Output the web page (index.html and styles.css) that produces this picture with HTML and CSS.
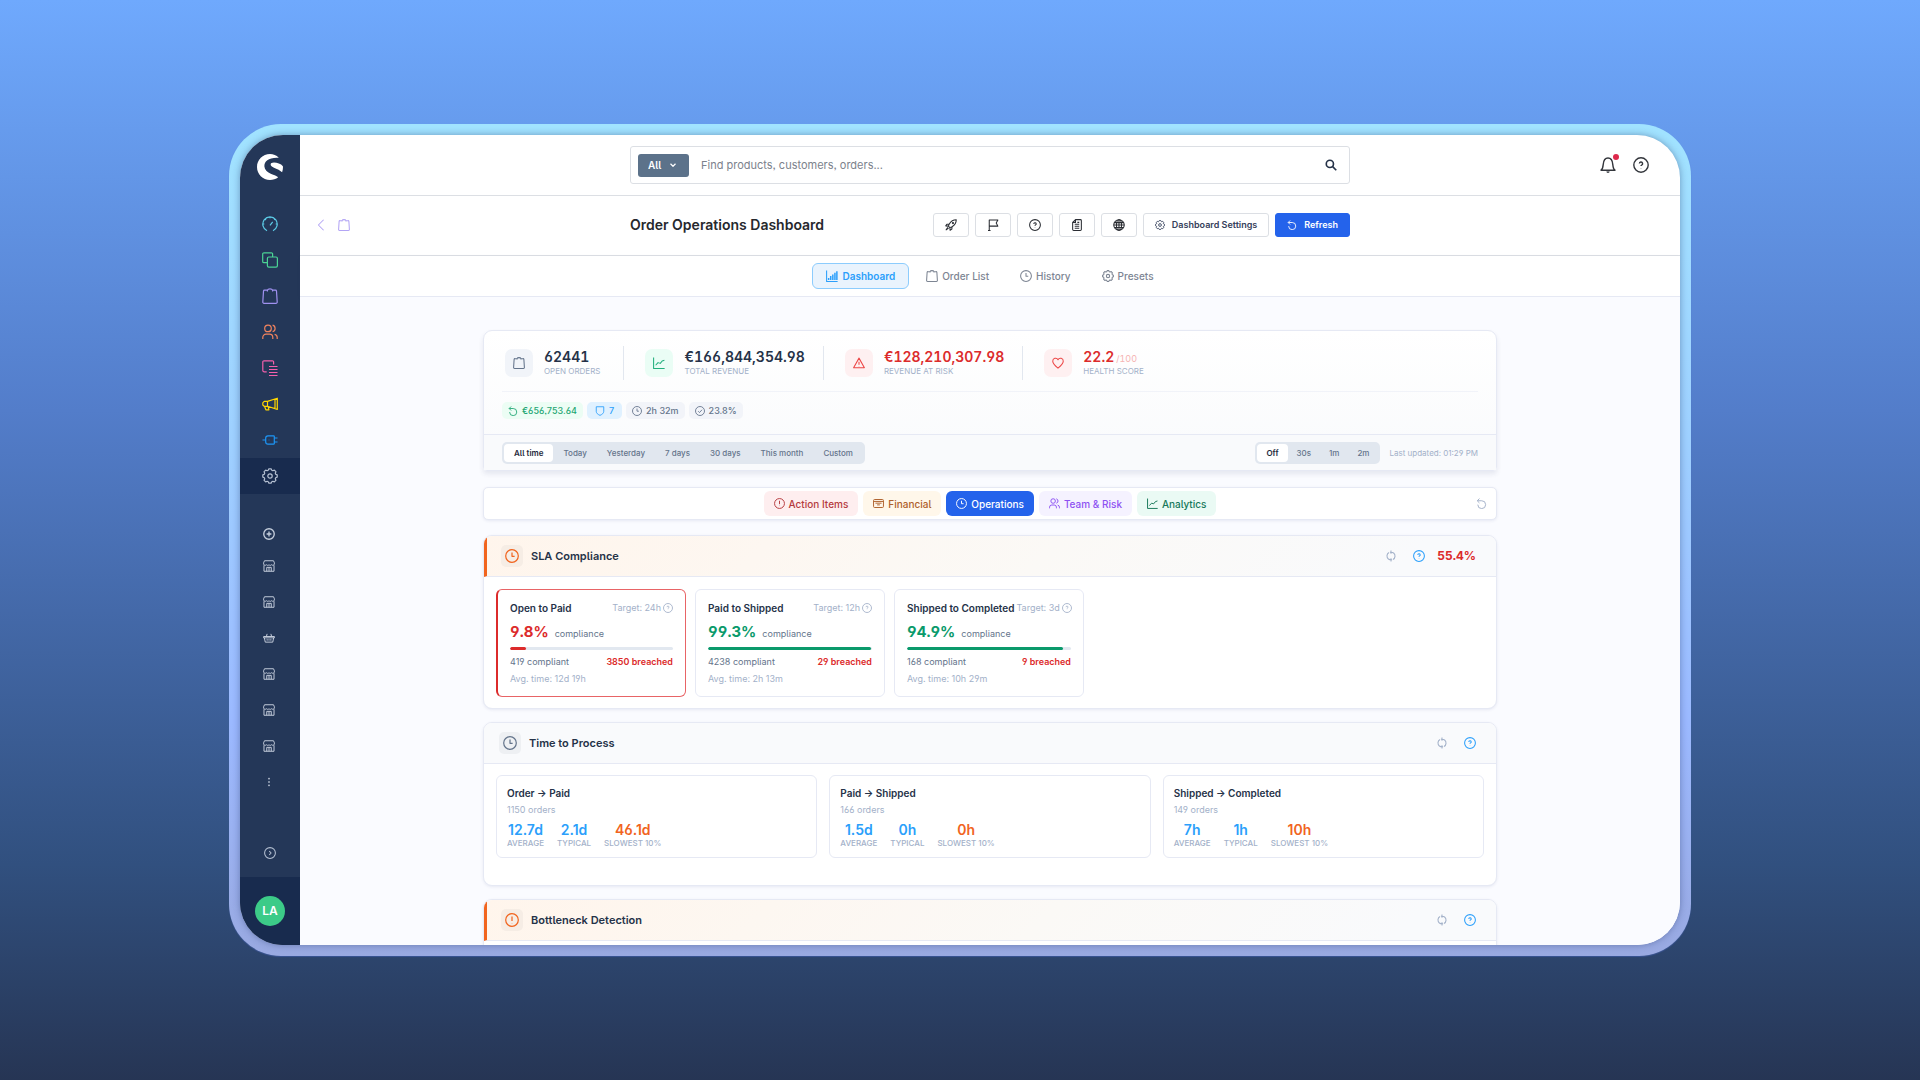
FILE: index.html
```html
<!DOCTYPE html>
<html lang="en">
<head>
<meta charset="utf-8">
<meta name="viewport" content="width=device-width, initial-scale=1">
<title>Order Operations Dashboard</title>
<link rel="stylesheet" href="styles.css">
</head>
<body>
<svg class="sprite" aria-hidden="true">
  <symbol id="logo" viewBox="0 0 26 26"><path fill="currentColor" stroke="none" d="M21.8 3.7C19.4 1.300 16.300 0 13 0 5.800 0 0 5.800 0 13s5.800 13 13 13c3 0 5.900-1 8.200-2.800C18 20.500 7.900 19.500 7.400 12.500 7.100 6.800 12 3.100 21.800 3.700z"/><path fill="currentColor" stroke="none" d="M25.900 12.200C24 9.800 20 8.600 17 8.600c-2.600 0-3.700 1-3.200 2.600.7 2.400 7 3 11.300 7 .8-2 1-4 .8-6z"/></symbol>
  <symbol id="gauge" viewBox="0 0 16 16"><path d="M5 14.700A7.200 7.200 0 1 1 11 14.700M8 9.300l2.700-3.500M8 1v1.300M1 8h1.300M13.700 8H15M3.200 3.200l.8.8M12.800 3.200l-.6.6"/></symbol>
  <symbol id="copy" viewBox="0 0 16 16"><rect x="5.400" y="5" width="10" height="10.200" rx="1.400"/><path d="M5.400 10.700H2a1.300 1.300 0 0 1-1.300-1.300V2.100A1.300 1.300 0 0 1 2 .8h7.300a1.300 1.300 0 0 1 1.300 1.300V5"/></symbol>
  <symbol id="bag" viewBox="0 0 16 16"><path d="M5.400 3.400V2.200H2.500a1 1 0 0 0-1 .9L.8 14a1.200 1.200 0 0 0 1.200 1.300h12a1.200 1.200 0 0 0 1.200-1.300l-.7-10.900a1 1 0 0 0-1-.9h-2.900v1.200M5.400 2.200C6 .4 10 .4 10.600 2.200"/></symbol>
  <symbol id="users" viewBox="0 0 16 16"><circle cx="6" cy="4.400" r="3.300"/><path d="M.8 15v-1.600A3.200 3.200 0 0 1 4 10.200h3.600a3.200 3.200 0 0 1 3.200 3.200V15M10.600 1.200a3.300 3.300 0 0 1 0 6.400M12.600 10.300a3.200 3.200 0 0 1 2.600 3.100V15"/></symbol>
  <symbol id="content" viewBox="0 0 16 16"><path d="M11.600 4.500V2A1.200 1.200 0 0 0 10.400.8H2A1.200 1.200 0 0 0 .8 2v8.600A1.200 1.200 0 0 0 2 11.800h2.700M7 6.500h8.500M7 9.500h8.500M7 12.500h8.500M7 15.500h8.500"/></symbol>
  <symbol id="megaphone" viewBox="0 0 16 16"><path d="M5.500 5.400L15.300 2.200v11.200L5.500 10.300zM5.500 5.400H2.200L.8 6.800v2.200l1.400 1.300h3.300M2.500 10.300l1.400 3.500h3l-.7-3.200M13 3v9.600"/></symbol>
  <symbol id="plug" viewBox="0 0 16 16"><path d="M.5 8h3.200M11.500 3.800H6A2.300 2.300 0 0 0 3.700 6v4A2.300 2.300 0 0 0 6 12.200h5.500a.8.8 0 0 0 .8-.8V4.600a.8.800 0 0 0-.8-.8zM12.300 6h3.200M12.300 10h3.200M6.700 8h.6"/></symbol>
  <symbol id="cog" viewBox="0 0 16 16"><path d="M15.200 6.900v2.200l-1.500.7-.4 1 .6 1.500-1.600 1.600-1.500-.6-1 .4-.7 1.500H6.900l-.7-1.500-1-.4-1.500.6-1.600-1.600.6-1.500-.4-1-1.500-.7V6.900l1.500-.7.400-1-.6-1.500 1.600-1.600 1.500.6 1-.4.7-1.500h2.200l.7 1.500 1 .4 1.500-.6 1.600 1.600-.6 1.500.4 1z"/><circle cx="8" cy="8" r="2.200"/></symbol>
  <symbol id="plus" viewBox="0 0 16 16"><circle cx="8" cy="8" r="7"/><path d="M8 4.800v6.400M4.800 8h6.400"/></symbol>
  <symbol id="store" viewBox="0 0 16 16"><path d="M2 1h12l1.200 2.800v1.400a2 2 0 0 1-3.600 1 2.200 2.200 0 0 1-3.600 0 2.200 2.200 0 0 1-3.600 0 2 2 0 0 1-3.600-1V3.800zM1.300 7v8h13.400V7M5 15V9.800h6V15M8 9.800V15"/></symbol>
  <symbol id="basket" viewBox="0 0 16 16"><path d="M.8 6h14.400v1.800H.8zM1.800 7.800l1.200 5.700h10l1.200-5.700M4.500 6l1-3.500M11.500 6l-1-3.500M5.500 9.500v2M8 9.500v2M10.500 9.500v2"/></symbol>
  <symbol id="dots" viewBox="0 0 16 16"><g fill="currentColor" stroke="none"><rect x="7" y="2.500" width="2" height="2"/><rect x="7" y="7" width="2" height="2"/><rect x="7" y="11.500" width="2" height="2"/></g></symbol>
  <symbol id="next" viewBox="0 0 16 16"><circle cx="8" cy="8" r="7.200"/><path d="M7 5.500L9.500 8 7 10.500"/></symbol>
  <symbol id="back" viewBox="0 0 16 16"><path d="M11.500 1L4.500 8l7 7"/></symbol>
  <symbol id="down" viewBox="0 0 16 16"><path d="M3 5.500l5 5 5-5"/></symbol>
  <symbol id="search" viewBox="0 0 16 16"><circle cx="6.500" cy="6.500" r="4.800"/><path d="M10.200 10.200l4.800 4.800"/></symbol>
  <symbol id="bell" viewBox="0 0 16 16"><path d="M1 13.200h14c-1.600-1-1.900-2.300-2.200-5.600C12.500 3.600 11 1 8 1S3.500 3.600 3.200 7.600C2.900 10.900 2.600 12.200 1 13.200zM6.800 14.500c.4.900 2 .9 2.400 0"/></symbol>
  <symbol id="help" viewBox="0 0 16 16"><circle cx="8" cy="8" r="7.200"/><path d="M6.400 6.600a1.600 1.600 0 1 1 2.200 1.500c-.4.200-.6.400-.6.900M8 10.900v.3"/></symbol>
  <symbol id="rocket" viewBox="0 0 16 16"><path d="M15 1c-4.500 0-7 1.800-9.300 5.600L4.500 9.500l2 2 2.900-1.200C13.200 8 15 5.500 15 1zM5.700 6.600l-3.200.3L1 9.200l3.500.3M9.400 10.300l-.3 3.200L6.800 15l-.3-3.500M3.800 11.200L1.500 14.500l3.300-2.300"/><circle cx="10.600" cy="5.400" r=".8"/></symbol>
  <symbol id="flag" viewBox="0 0 16 16"><path d="M3 15.500V1.200h11.500L12.300 5.300l2.200 4.200H3M1.300 15.300h3.400"/></symbol>
  <symbol id="doc" viewBox="0 0 16 16"><path d="M6 .8h6.500A1.300 1.300 0 0 1 13.800 2v12a1.300 1.300 0 0 1-1.300 1.200h-9A1.300 1.300 0 0 1 2.200 14V4.500zM6 .8v3.700H2.200M5 7h6M5 9.600h6M5 12.200h6M8.500 4.500H11"/></symbol>
  <symbol id="globe" viewBox="0 0 16 16"><circle cx="8" cy="8" r="7"/><ellipse cx="8" cy="8" rx="3.400" ry="7"/><path d="M8 1v14M1 8h14M2 4.800h12M2 11.200h12"/></symbol>
  <symbol id="undo" viewBox="0 0 16 16"><path d="M2 4h6.300a5.700 5.700 0 1 1-5.700 5.700M5 .8L1.800 4l3.200 3.200"/></symbol>
  <symbol id="bars" viewBox="0 0 16 16"><path d="M.8.800v14.400h14.700"/><path d="M3.500 13.200v-2.700M6.300 13.200V8M9.100 13.200V6M11.900 13.200V3.500M14.500 13.200V1.500" stroke-width="2"/></symbol>
  <symbol id="clock" viewBox="0 0 16 16"><circle cx="8" cy="8" r="7.200"/><path d="M8 4v4.300h3"/></symbol>
  <symbol id="trend" viewBox="0 0 16 16"><path d="M.8.800v14.400h14.700M3.500 11l3.200-3.500 3 1 2.500-3.200 3-1"/></symbol>
  <symbol id="warn" viewBox="0 0 16 16"><path d="M8 1.500L15.200 14.200H.8zM8 6.300v3.900M8 12v.3"/></symbol>
  <symbol id="heart" viewBox="0 0 16 16"><path d="M8 14.800C4 11.500 1 8.800 1 5.500A3.700 3.700 0 0 1 8 3.700a3.700 3.700 0 0 1 7 1.800c0 3.300-3 6-7 9.300z"/></symbol>
  <symbol id="shield" viewBox="0 0 16 16"><path d="M2 1.200h12v7.300c0 3-2.500 5-6 6.500-3.500-1.500-6-3.500-6-6.500z"/></symbol>
  <symbol id="check" viewBox="0 0 16 16"><circle cx="8" cy="8" r="7.200"/><path d="M5 8.300l2.200 2.200L11.200 6"/></symbol>
  <symbol id="alert" viewBox="0 0 16 16"><circle cx="8" cy="8" r="7.200"/><path d="M8 4v5M8 11.300v.4"/></symbol>
  <symbol id="cash" viewBox="0 0 16 16"><rect x=".8" y="2.200" width="14.400" height="11.600" rx="1.500"/><path d="M.8 5h14.400M3.500 7.500h9M6 10h4"/></symbol>
  <symbol id="sync" viewBox="0 0 16 16"><path d="M5.200 3.400A5.300 5.300 0 0 0 4.500 12M10.800 12.600A5.300 5.300 0 0 0 11.500 4M8 2.900h-1.500M8 2.900c1.400 0 2.500.4 3.500 1.100M8 13.100c-1.400 0-2.500-.4-3.500-1.100M8 13.100h1.500M8 .8v4.200M8 11v4.200"/></symbol>
</svg>

<div class="frame">
  <div class="app">
    <aside class="sidebar">
      <a class="brand" href="#" aria-label="Home"><svg class="icon icon-26"><use href="#logo"/></svg></a>
      <nav class="menu" aria-label="Main menu">
        <a href="#" class="c-cyan" aria-label="Dashboard"><svg class="icon icon-16"><use href="#gauge"/></svg></a>
        <a href="#" class="c-green" aria-label="Catalogues"><svg class="icon icon-16"><use href="#copy"/></svg></a>
        <a href="#" class="c-violet" aria-label="Orders"><svg class="icon icon-16"><use href="#bag"/></svg></a>
        <a href="#" class="c-coral" aria-label="Customers"><svg class="icon icon-16"><use href="#users"/></svg></a>
        <a href="#" class="c-pink" aria-label="Content"><svg class="icon icon-16"><use href="#content"/></svg></a>
        <a href="#" class="c-yellow" aria-label="Marketing"><svg class="icon icon-16"><use href="#megaphone"/></svg></a>
        <a href="#" class="c-blue" aria-label="Extensions"><svg class="icon icon-16"><use href="#plug"/></svg></a>
        <a href="#" class="is-active" aria-label="Settings"><svg class="icon icon-16"><use href="#cog"/></svg></a>
      </nav>
      <nav class="menu channels" aria-label="Sales channels">
        <a href="#" class="add bold" aria-label="Add channel"><svg class="icon icon-12"><use href="#plus"/></svg></a>
        <a href="#" aria-label="Storefront 1"><svg class="icon icon-12"><use href="#store"/></svg></a>
        <a href="#" aria-label="Storefront 2"><svg class="icon icon-12"><use href="#store"/></svg></a>
        <a href="#" aria-label="Headless"><svg class="icon icon-12"><use href="#basket"/></svg></a>
        <a href="#" aria-label="Storefront 3"><svg class="icon icon-12"><use href="#store"/></svg></a>
        <a href="#" aria-label="Storefront 4"><svg class="icon icon-12"><use href="#store"/></svg></a>
        <a href="#" aria-label="Storefront 5"><svg class="icon icon-12"><use href="#store"/></svg></a>
        <a href="#" aria-label="More"><svg class="icon icon-12"><use href="#dots"/></svg></a>
      </nav>
      <button class="expand" aria-label="Expand menu"><svg class="icon icon-12"><use href="#next"/></svg></button>
      <div class="user"><button class="avatar">LA</button></div>
    </aside>

    <div class="page">
      <header class="topbar">
        <form class="search">
          <div class="scope">
            <select aria-label="Search scope"><option>All</option></select>
            <svg class="icon icon-8"><use href="#down"/></svg>
          </div>
          <input type="text" aria-label="Search" placeholder="Find products, customers, orders...">
          <button type="button" class="plain bolder" aria-label="Search"><svg class="icon icon-12"><use href="#search"/></svg></button>
        </form>
        <div class="top-actions">
          <button class="plain bell" aria-label="Notifications"><svg class="icon icon-16"><use href="#bell"/></svg><span class="dot"></span></button>
          <button class="plain" aria-label="Help"><svg class="icon icon-16"><use href="#help"/></svg></button>
        </div>
      </header>

      <div class="heading">
        <div class="crumbs">
          <a href="#" aria-label="Back"><svg class="icon icon-12"><use href="#back"/></svg></a>
          <a href="#" aria-label="Orders"><svg class="icon icon-12"><use href="#bag"/></svg></a>
        </div>
        <div class="heading-main">
          <h1>Order Operations Dashboard</h1>
          <div class="actions">
            <button class="btn btn-icon" aria-label="Quick start"><svg class="icon icon-12"><use href="#rocket"/></svg></button>
            <button class="btn btn-icon" aria-label="Flag"><svg class="icon icon-12"><use href="#flag"/></svg></button>
            <button class="btn btn-icon" aria-label="Help"><svg class="icon icon-12"><use href="#help"/></svg></button>
            <button class="btn btn-icon" aria-label="Documentation"><svg class="icon icon-12"><use href="#doc"/></svg></button>
            <button class="btn btn-icon" aria-label="Website"><svg class="icon icon-12"><use href="#globe"/></svg></button>
            <button class="btn"><svg class="icon icon-10"><use href="#cog"/></svg>Dashboard Settings</button>
            <button class="btn btn-primary"><svg class="icon icon-10"><use href="#undo"/></svg>Refresh</button>
          </div>
        </div>
      </div>

      <nav class="tabs" aria-label="Views">
        <a href="#" class="tab is-active"><svg class="icon icon-12"><use href="#bars"/></svg>Dashboard</a>
        <a href="#" class="tab"><svg class="icon icon-12"><use href="#bag"/></svg>Order List</a>
        <a href="#" class="tab"><svg class="icon icon-12"><use href="#clock"/></svg>History</a>
        <a href="#" class="tab"><svg class="icon icon-12"><use href="#cog"/></svg>Presets</a>
      </nav>

      <main class="content">
        <section class="card summary">
          <div class="summary-top">
            <div class="stats">
              <div class="stat"><span class="tile"><svg class="icon icon-12"><use href="#bag"/></svg></span><div><div class="value">62441</div><div class="caption">OPEN ORDERS</div></div></div>
              <div class="stat"><span class="tile tile-green"><svg class="icon icon-12"><use href="#trend"/></svg></span><div><div class="value">€166,844,354.98</div><div class="caption">TOTAL REVENUE</div></div></div>
              <div class="stat"><span class="tile tile-red"><svg class="icon icon-12"><use href="#warn"/></svg></span><div><div class="value t-red">€128,210,307.98</div><div class="caption">REVENUE AT RISK</div></div></div>
              <div class="stat"><span class="tile tile-red"><svg class="icon icon-12"><use href="#heart"/></svg></span><div><div class="value t-red">22.2<small>/100</small></div><div class="caption">HEALTH SCORE</div></div></div>
            </div>
            <div class="pills">
              <span class="pill pill-green"><svg class="icon icon-10"><use href="#undo"/></svg>€656,753.64</span>
              <span class="pill pill-blue"><svg class="icon icon-10"><use href="#shield"/></svg>7</span>
              <span class="pill"><svg class="icon icon-10"><use href="#clock"/></svg>2h 32m</span>
              <span class="pill"><svg class="icon icon-10"><use href="#check"/></svg>23.8%</span>
            </div>
          </div>
          <div class="filters">
            <div class="segment segment-wide">
              <button class="is-on">All time</button><button>Today</button><button>Yesterday</button><button>7 days</button><button>30 days</button><button>This month</button><button>Custom</button>
            </div>
            <div class="auto">
              <div class="segment"><button class="is-on">Off</button><button>30s</button><button>1m</button><button>2m</button></div>
              <span class="updated">Last updated: 01:29 PM</span>
            </div>
          </div>
        </section>

        <nav class="card groups" aria-label="Sections">
          <div class="group-list">
            <a href="#" class="group g-red"><svg class="icon icon-11"><use href="#alert"/></svg>Action Items</a>
            <a href="#" class="group g-amber"><svg class="icon icon-11"><use href="#cash"/></svg>Financial</a>
            <a href="#" class="group g-blue"><svg class="icon icon-11"><use href="#clock"/></svg>Operations</a>
            <a href="#" class="group g-violet"><svg class="icon icon-11"><use href="#users"/></svg>Team &amp; Risk</a>
            <a href="#" class="group g-green"><svg class="icon icon-11"><use href="#trend"/></svg>Analytics</a>
          </div>
          <button class="plain muted" aria-label="Reset"><svg class="icon icon-11"><use href="#undo"/></svg></button>
        </nav>

        <section class="card panel accent">
          <header class="panel-head">
            <span class="badge"><svg class="icon icon-14"><use href="#clock"/></svg></span>
            <h2>SLA Compliance</h2>
            <button class="plain muted" aria-label="Reload"><svg class="icon icon-12"><use href="#sync"/></svg></button>
            <button class="plain info" aria-label="Info"><svg class="icon icon-12"><use href="#help"/></svg></button>
            <strong class="score">55.4%</strong>
          </header>
          <div class="sla-list">
            <article class="sla is-bad">
              <div class="row"><h3>Open to Paid</h3><span class="target">Target: 24h<svg class="icon icon-10"><use href="#help"/></svg></span></div>
              <div class="rate"><strong class="t-red">9.8%</strong><span>compliance</span></div>
              <div class="bar"><div class="fill fill-red" style="width:9.8%"></div></div>
              <div class="row counts"><span>419 compliant</span><b class="t-red">3850 breached</b></div>
              <div class="avg">Avg. time: 12d 19h</div>
            </article>
            <article class="sla">
              <div class="row"><h3>Paid to Shipped</h3><span class="target">Target: 12h<svg class="icon icon-10"><use href="#help"/></svg></span></div>
              <div class="rate"><strong>99.3%</strong><span>compliance</span></div>
              <div class="bar"><div class="fill" style="width:99.3%"></div></div>
              <div class="row counts"><span>4238 compliant</span><b class="t-red">29 breached</b></div>
              <div class="avg">Avg. time: 2h 13m</div>
            </article>
            <article class="sla">
              <div class="row"><h3>Shipped to Completed</h3><span class="target">Target: 3d<svg class="icon icon-10"><use href="#help"/></svg></span></div>
              <div class="rate"><strong>94.9%</strong><span>compliance</span></div>
              <div class="bar"><div class="fill" style="width:94.9%"></div></div>
              <div class="row counts"><span>168 compliant</span><b class="t-red">9 breached</b></div>
              <div class="avg">Avg. time: 10h 29m</div>
            </article>
          </div>
        </section>

        <section class="card panel">
          <header class="panel-head">
            <span class="badge"><svg class="icon icon-14"><use href="#clock"/></svg></span>
            <h2>Time to Process</h2>
            <button class="plain muted" aria-label="Reload"><svg class="icon icon-12"><use href="#sync"/></svg></button>
            <button class="plain info" aria-label="Info"><svg class="icon icon-12"><use href="#help"/></svg></button>
          </header>
          <div class="step-list">
            <article class="step">
              <h3>Order → Paid</h3><p>1150 orders</p>
              <dl><div><dd>12.7d</dd><dt>AVERAGE</dt></div><div><dd>2.1d</dd><dt>TYPICAL</dt></div><div class="slow"><dd>46.1d</dd><dt>SLOWEST 10%</dt></div></dl>
            </article>
            <article class="step">
              <h3>Paid → Shipped</h3><p>166 orders</p>
              <dl><div><dd>1.5d</dd><dt>AVERAGE</dt></div><div><dd>0h</dd><dt>TYPICAL</dt></div><div class="slow"><dd>0h</dd><dt>SLOWEST 10%</dt></div></dl>
            </article>
            <article class="step">
              <h3>Shipped → Completed</h3><p>149 orders</p>
              <dl><div><dd>7h</dd><dt>AVERAGE</dt></div><div><dd>1h</dd><dt>TYPICAL</dt></div><div class="slow"><dd>10h</dd><dt>SLOWEST 10%</dt></div></dl>
            </article>
          </div>
        </section>

        <section class="card panel accent">
          <header class="panel-head">
            <span class="badge"><svg class="icon icon-14"><use href="#alert"/></svg></span>
            <h2>Bottleneck Detection</h2>
            <button class="plain muted" aria-label="Reload"><svg class="icon icon-12"><use href="#sync"/></svg></button>
            <button class="plain info" aria-label="Info"><svg class="icon icon-12"><use href="#help"/></svg></button>
          </header>
          <div class="panel-space"></div>
        </section>
      </main>
    </div>
  </div>
</div>
</body>
</html>
```
FILE: styles.css
```css
:root {
  --navy: #243758;
  --navy-deep: #182b4e;
  --line: #dcdfe4;
  --soft-line: #e6e9f4;
  --ink: #253248;
  --slate: #64748b;
  --mute: #a3b1c9;
  --blue: #2463eb;
  --sky: #2b9ffb;
  --red: #dc2b2b;
  --green: #0a9a6b;
  --orange: #f1641e;
}

* { box-sizing: border-box; }

body {
  margin: 0;
  height: 100vh;
  padding: 124px 229px;
  background: linear-gradient(#6fa9fd 0%, #537dca 38%, #31507f 80%, #263554 100%);
  color: var(--ink);
  font-family: "Inter", sans-serif;
  font-feature-settings: "cv05", "cv03", "cv04", "ss03";
  font-size: 9px;
  line-height: 12px;
}

h1, h2, h3, p, dl, dd { margin: 0; }
a { color: inherit; text-decoration: none; }
button, input, select { font: inherit; font-feature-settings: inherit; color: inherit; }
button { cursor: pointer; }

.sprite { position: absolute; width: 0; height: 0; }

.icon { display: block; flex: none; fill: none; stroke: currentColor; stroke-width: 1.4; stroke-linejoin: round; }
.icon-8 { width: 8px; height: 8px; stroke-width: 2.4; }
.icon-10 { width: 10px; height: 10px; }
.icon-11 { width: 11px; height: 11px; }
.icon-12 { width: 12px; height: 12px; }
.icon-14 { width: 14px; height: 14px; }
.icon-16 { width: 16px; height: 16px; stroke-width: 1.2; }
.icon-26 { width: 26px; height: 26px; }
.bolder .icon { stroke-width: 2.2; }

.plain { display: grid; place-items: center; padding: 0; border: 0; background: none; }
.muted { color: var(--mute); }
.info { color: var(--sky); }
.t-red { color: var(--red); }

/* Window */
.frame {
  height: 100%;
  padding: 11px;
  border-radius: 52px;
  background: linear-gradient(#a1e3ff 0%, #9ed0ff 38%, #9bb9ff 72%, #99a9e1 100%);
  box-shadow: 0 1px 1px rgba(70, 100, 190, .5);
}
.app {
  display: flex;
  height: 100%;
  overflow: hidden;
  border-radius: 43px;
  background: #fff;
  box-shadow: 0 0 7px rgba(40, 60, 110, .45);
}

/* Sidebar */
.sidebar { display: flex; flex: none; flex-direction: column; width: 60px; background: var(--navy); color: #b5c0d2; }
.brand { display: grid; place-items: center; height: 64px; margin-bottom: 7px; color: #fff; }
.menu { display: flex; flex-direction: column; }
.menu a { display: grid; place-items: center; height: 36px; }
.menu .is-active { background: var(--navy-deep); }
.channels { margin-top: 26px; padding-right: 3px; color: #c5cedc; }
.channels .icon { stroke-width: 1.3; }
.channels .add { height: 28px; }
.channels .bold .icon { stroke-width: 1.8; }
.c-cyan { color: #5ccbe6; }
.c-green { color: #4bd495; }
.c-violet { color: #a091f0; }
.c-coral { color: #f0835e; }
.c-pink { color: #f560ac; }
.c-yellow { color: #ffd600; }
.c-blue { color: #1d96f6; }
.expand { display: grid; place-items: center; height: 48px; margin-top: auto; padding: 0; border: 0; background: none; }
.user { display: grid; place-items: center; height: 68px; background: var(--navy-deep); }
.avatar { width: 30px; height: 30px; padding: 0; border: 0; border-radius: 50%; background: #3ccb88; color: #fff; font-size: 12px; font-weight: 600; }

/* Page */
.page { display: flex; flex: 1; flex-direction: column; min-width: 0; }
.topbar, .heading {
  display: grid;
  grid-template-columns: 1fr minmax(0, 720px) 1fr;
  align-items: center;
  flex: none;
  border-bottom: 1px solid var(--line);
}
.topbar { height: 61px; }
.heading { height: 60px; padding-bottom: 1px; }

.search { display: flex; grid-column: 2; align-items: center; height: 38px; padding: 0 12px 0 7px; border: 1px solid var(--line); border-radius: 3px; }
.scope { display: grid; align-items: center; width: 51px; height: 23px; border-radius: 3px; background: #5c728a; color: #fff; }
.scope select { grid-area: 1 / 1; width: 100%; height: 100%; padding: 0 10px; border: 0; background: none; appearance: none; font-size: 10px; font-weight: 600; }
.scope .icon { grid-area: 1 / 1; justify-self: end; margin-right: 12px; pointer-events: none; }
.search input { flex: 1; min-width: 0; padding: 0 12px; border: 0; outline: 0; background: none; font-size: 11px; }
.search input::placeholder { color: #7c828c; opacity: 1; }

.top-actions { display: flex; gap: 17px; justify-self: end; margin-right: 31px; color: #33363c; }
.top-actions .icon { stroke-width: 1.4; }
.bell { position: relative; }
.dot { position: absolute; top: -3px; right: -3px; width: 6px; height: 6px; border-radius: 50%; background: #de294c; }

.crumbs { display: flex; gap: 11px; padding-left: 15px; color: #b3a5f5; }
.heading-main { display: flex; align-items: center; justify-content: space-between; }
h1 { color: #26282d; font-size: 14px; line-height: 18px; font-weight: 600; }
.actions { display: flex; gap: 6px; }
.btn { display: flex; align-items: center; justify-content: center; gap: 7px; height: 24px; padding: 0 11px; border: 1px solid var(--line); border-radius: 3px; background: #fff; color: #35405a; font-weight: 600; }
.btn-icon { width: 36px; padding: 0; color: #2a2d33; }
.btn-primary { border-color: var(--blue); background: var(--blue); color: #fff; }

.tabs { display: flex; flex: none; align-items: center; justify-content: center; gap: 3px; height: 41px; border-bottom: 1px solid var(--soft-line); box-shadow: 0 1px 3px rgba(40, 60, 110, .08); }
.tab { display: flex; align-items: center; gap: 4px; height: 26px; padding: 0 13px; border: 1px solid transparent; border-radius: 6px; color: #7d8593; font-size: 10px; font-weight: 500; }
.tab.is-active { border-color: #8cccfd; background: #e9f3fd; color: var(--sky); font-weight: 600; }

.content { display: flex; flex: 1; flex-direction: column; align-items: center; gap: 13px; min-height: 0; overflow: hidden; padding: 33px 16px 0; background: #fafbff; }
.card { flex: none; width: 100%; max-width: 1014px; border: 1px solid var(--soft-line); border-radius: 9px; background: #fff; box-shadow: 0 1px 3px rgba(60, 70, 140, .1); }

/* Summary */
.summary { margin-bottom: 3px; border-radius: 9px 9px 4px 4px; background: linear-gradient(#fff, #f9fafc); box-shadow: 0 3px 5px rgba(50, 60, 110, .1); }
.summary-top { padding: 15px 18px; }
.stats { display: flex; padding-bottom: 11px; border-bottom: 1px solid #f1f3f9; }
.stat { display: flex; align-items: center; gap: 11px; height: 34px; padding: 0 18px 0 21px; border-left: 1px solid #e2e7ef; }
.stat:first-child { padding: 0 23px 0 3px; border-left: 0; }
.tile { display: grid; place-items: center; width: 28px; height: 28px; border-radius: 7px; background: #f1f4f9; color: var(--slate); }
.tile-green { background: #eafdf5; color: #22b07d; }
.tile-red { background: #fef0f1; color: #ec4545; }
.value { font-size: 14px; line-height: 16px; font-weight: 600; font-variant-numeric: tabular-nums; }
.value small { margin-left: 2px; color: #f6b4b4; font-size: 9px; line-height: 9px; font-weight: 400; }
.caption { color: var(--mute); font-size: 8px; line-height: 13px; }
.pills { display: flex; gap: 4px; margin-top: 10px; }
.pill { display: flex; align-items: center; gap: 4px; height: 17px; padding: 0 6px; border-radius: 5px; background: #f2f4f9; color: var(--slate); font-weight: 500; }
.pill-green { background: #ecfdf4; color: #1ea673; }
.pill-blue { padding: 0 8px; background: #e0f1ff; color: var(--sky); }
.filters { display: flex; align-items: center; justify-content: space-between; height: 36px; padding: 0 18px; border-top: 1px solid var(--soft-line); background: #f9fafc; }
.segment { display: flex; padding: 2px; border-radius: 5px; background: #e1e7ef; }
.segment button { height: 18px; padding: 0 9px; border: 0; border-radius: 4px; background: none; color: var(--slate); font-size: 8px; font-weight: 500; }
.segment-wide button { padding: 0 10px; }
.segment .is-on { background: #fff; color: #1e293b; font-weight: 600; }
.auto { display: flex; align-items: center; gap: 9px; }
.updated { color: var(--mute); font-size: 8px; }

/* Section switcher */
.groups { display: grid; grid-template-columns: 1fr auto 1fr; align-items: center; height: 33px; margin-bottom: 2px; padding: 0 9px; border-radius: 5px; }
.group-list { display: flex; grid-column: 2; gap: 5px; }
.groups .plain { justify-self: end; }
.group { display: flex; align-items: center; gap: 4px; height: 25px; padding: 0 10px; border-radius: 6px; font-size: 10px; font-weight: 500; }
.g-red { background: #feeeef; color: #b53a3d; }
.g-amber { background: #fff7ea; color: #ae602b; }
.g-blue { background: var(--blue); color: #fff; }
.g-violet { background: #f5f2ff; color: #8d51f2; }
.g-green { background: #eafaf4; color: #17785a; }

/* Panels */
.panel { overflow: hidden; }
.panel-head { display: flex; align-items: center; gap: 16px; height: 41px; padding: 0 20px 0 15px; border-bottom: 1px solid var(--soft-line); background: #f9fafc; }
.accent .panel-head { padding-left: 14px; border-left: 3px solid var(--orange); background: linear-gradient(135deg, #fff5ec, #fbf9f6 55%, #f9fafc 90%); }
.badge { display: grid; place-items: center; width: 22px; height: 22px; border-radius: 5px; background: #eef0f3; color: var(--slate); }
.accent .badge { background: #f6ede5; color: var(--orange); }
h2 { flex: 1; margin-left: -8px; font-size: 11px; line-height: 14px; font-weight: 600; }
.score { margin-left: -4px; color: var(--red); font-size: 12px; font-weight: 700; font-variant-numeric: tabular-nums; }
.panel-space { height: 60px; }

h3 { font-size: 10px; line-height: 12px; font-weight: 600; }
.row { display: flex; align-items: center; justify-content: space-between; gap: 2px; white-space: nowrap; }

.sla-list { display: grid; grid-template-columns: repeat(auto-fill, 190px); gap: 9px; padding: 12px 12px 11px; }
.sla { padding: 12px 12px 11px; border: 1px solid var(--soft-line); border-radius: 6px; }
.sla.is-bad { border-color: #e86466; border-left: 2px solid var(--red); }
.target { display: flex; align-items: center; gap: 2px; color: var(--mute); }
.rate { display: flex; align-items: baseline; gap: 6px; margin-top: 8px; }
.rate strong { color: var(--green); font-size: 15px; line-height: 20px; font-weight: 700; font-variant-numeric: tabular-nums; }
.rate .t-red { color: var(--red); }
.rate span, .counts span { color: var(--slate); }
.bar { height: 3px; margin-top: 5px; overflow: hidden; border-radius: 2px; background: #e2e8f0; }
.fill { height: 100%; border-radius: 2px; background: var(--green); }
.fill-red { background: var(--red); }
.counts { margin-top: 6px; }
.counts b { font-weight: 600; }
.avg { margin-top: 5px; color: var(--mute); }

.step-list { display: grid; grid-template-columns: repeat(3, minmax(0, 1fr)); gap: 12px; padding: 11px 12px 27px; }
.step { padding: 11px 10px 9px; border: 1px solid var(--soft-line); border-radius: 6px; }
.step p { margin-top: 5px; color: var(--mute); }
.step dl { display: flex; gap: 13px; margin-top: 6px; text-align: center; }
.step dl > div { display: flex; flex-direction: column; }
.step dd { color: var(--sky); font-size: 14px; line-height: 16px; font-weight: 600; }
.step .slow dd { color: var(--orange); }
.step dt { color: var(--mute); font-size: 8px; line-height: 10px; font-weight: 500; }
```
